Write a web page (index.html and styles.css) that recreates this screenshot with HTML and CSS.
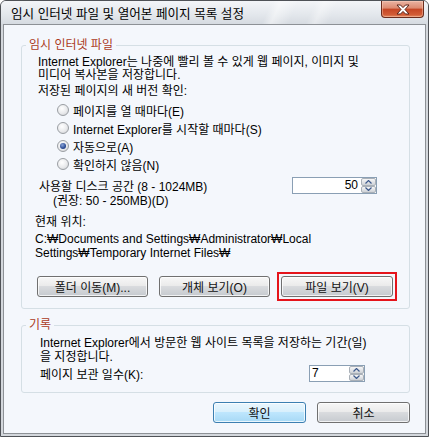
FILE: index.html
```html
<!DOCTYPE html>
<html lang="ko">

<head>
    <meta charset="UTF-8">
    <meta name="viewport" content="width=device-width, initial-scale=1.0">
    <title>임시 인터넷 파일 및 열어본 페이지 목록 설정</title>

    <link rel="stylesheet" href="styles.css">
</head>

<body>
    <div class="window">
        <header class="titlebar">
            <span class="title">임시 인터넷 파일 및 열어본 페이지 목록 설정</span>
            <button class="close-btn" type="button">
                <svg width="16" height="11" viewBox="0 0 16 11">
                    <path d="M2 1 L5.5 1 L8 3.6 L10.5 1 L14 1 L10 5.5 L14 10 L10.5 10 L8 7.4 L5.5 10 L2 10 L6 5.5 Z"
                        fill="#fff" stroke="#5a2418" stroke-width="1" stroke-linejoin="round" />
                </svg>
            </button>
        </header>

        <main class="client">
            <fieldset class="group group-cache">
                <legend>임시 인터넷 파일</legend>
                <p class="desc">Internet Explorer는 나중에 빨리 볼 수 있게 웹 페이지, 이미지 및<br>미디어 복사본을 저장합니다.</p>
                <p class="check-label">저장된 페이지의 새 버전 확인:</p>
                <ul class="radio-list">
                    <li><span class="radio"></span>페이지를 열 때마다(E)</li>
                    <li><span class="radio"></span>Internet Explorer를 시작할 때마다(S)</li>
                    <li><span class="radio checked"></span>자동으로(A)</li>
                    <li><span class="radio"></span>확인하지 않음(N)</li>
                </ul>
                <div class="disk-row">
                    <div class="disk-label">
                        <p>사용할 디스크 공간 (8 - 1024MB)</p>
                        <p class="disk-hint">(권장: 50 - 250MB)(D)</p>
                    </div>
                    <div class="spin spin-disk">
                        <span class="spin-value">50</span>
                        <div class="spin-btns">
                            <span class="spin-btn"><svg width="7" height="4" viewBox="0 0 7 4"><path d="M0.5 3.5 L3.5 0.5 L6.5 3.5" fill="none" stroke="#3d5a8c" stroke-width="1.2" /></svg></span>
                            <span class="spin-btn"><svg width="7" height="4" viewBox="0 0 7 4"><path d="M0.5 0.5 L3.5 3.5 L6.5 0.5" fill="none" stroke="#3d5a8c" stroke-width="1.2" /></svg></span>
                        </div>
                    </div>
                </div>
                <p class="location-label">현재 위치:</p>
                <p class="location-path">C:₩Documents and Settings₩Administrator₩Local<br>Settings₩Temporary Internet Files₩</p>
                <div class="group-buttons">
                    <button class="btn" type="button">폴더 이동(M)...</button>
                    <button class="btn" type="button">개체 보기(O)</button>
                    <span class="focus-ring">
                        <button class="btn btn-wide" type="button">파일 보기(V)</button>
                    </span>
                </div>
            </fieldset>

            <fieldset class="group group-history">
                <legend>기록</legend>
                <p class="desc">Internet Explorer에서 방문한 웹 사이트 목록을 저장하는 기간(일)<br>을 지정합니다.</p>
                <div class="days-row">
                    <p class="days-label">페이지 보관 일수(K):</p>
                    <div class="spin spin-days">
                        <span class="spin-value">7</span>
                        <div class="spin-btns">
                            <span class="spin-btn"><svg width="7" height="4" viewBox="0 0 7 4"><path d="M0.5 3.5 L3.5 0.5 L6.5 3.5" fill="none" stroke="#3d5a8c" stroke-width="1.2" /></svg></span>
                            <span class="spin-btn"><svg width="7" height="4" viewBox="0 0 7 4"><path d="M0.5 0.5 L3.5 3.5 L6.5 0.5" fill="none" stroke="#3d5a8c" stroke-width="1.2" /></svg></span>
                        </div>
                    </div>
                </div>
            </fieldset>

            <div class="dialog-buttons">
                <button class="btn btn-default" type="button">확인</button>
                <button class="btn" type="button">취소</button>
            </div>
        </main>
    </div>
</body>

</html>
```

FILE: styles.css
```css
* {
    padding: 0;
    margin: 0;
    box-sizing: border-box;
}

body {
    font-family: "Liberation Sans", "Noto Sans CJK KR", sans-serif;
    font-size: 12px;
    color: #000;
    background: #fff;
}

.window {
    width: 429px;
    height: 437px;
    border: 1px solid #4f5257;
    border-radius: 6px 6px 0 0;
    background: #d3d7dc;
    padding: 0 2px 2px 2px;
    display: flex;
    flex-direction: column;
}

.titlebar {
    height: 23px;
    display: flex;
    align-items: flex-start;
    margin: 0 -2px;
    padding: 0 4px 0 10px;
    border-radius: 5px 5px 0 0;
    background:
        linear-gradient(115deg, transparent 62%, rgba(255, 255, 255, .45) 64%, transparent 68%, transparent 72%, rgba(255, 255, 255, .35) 74%, transparent 77%),
        linear-gradient(to bottom, #f3f5f8, #e3e7ec 60%, #d6dbe1);
}

.title {
    margin-top: 6px;
    line-height: 15px;
    font-size: 12.6px;
    color: #000;
}

.close-btn {
    margin-left: auto;
    width: 43px;
    height: 17px;
    border: 1px solid #6b2c1d;
    border-top: none;
    border-radius: 0 0 4px 4px;
    background: linear-gradient(to bottom, #eab3a2, #dc8a70 45%, #c54524 50%, #d25c36 85%, #e58a62);
    display: flex;
    align-items: center;
    justify-content: center;
    box-shadow: inset 0 0 0 1px rgba(255, 220, 200, .4);
}

.client {
    flex: 1;
    background: #f4f7fc;
    border: 1px solid #8d9196;
    padding-top: 13px;
    display: flex;
    flex-direction: column;
}

.group {
    margin-left: 17px;
    width: 389px;
    border: 1px solid #d5dfe5;
    border-radius: 3px;
    padding: 0;
}

.group legend {
    margin-left: 4px;
    padding: 0 3px;
    line-height: 14px;
    color: #ab3a1c;
}

.group-cache {
    padding-bottom: 11px;
}

.group-history {
    margin-top: 9px;
    padding-bottom: 10px;
}

p {
    white-space: nowrap;
}

.group-cache .desc {
    margin: 4px 0 0 16px;
    line-height: 13px;
}

.check-label {
    margin: 3px 0 0 16px;
    line-height: 13px;
}

.radio-list {
    margin: 3px 0 0 35px;
    list-style: none;
}

.radio-list li {
    height: 18px;
    display: flex;
    align-items: center;
    gap: 4px;
}

.radio {
    width: 12px;
    height: 12px;
    border: 1px solid #9a9ea3;
    border-radius: 50%;
    background: radial-gradient(circle at 40% 35%, #ffffff, #e9eaec 55%, #c9cbce);
    display: flex;
    align-items: center;
    justify-content: center;
}

.radio.checked::after {
    content: "";
    width: 6px;
    height: 6px;
    border-radius: 50%;
    background: radial-gradient(circle at 40% 35%, #8aa4d8, #2c4c94 60%, #1d3570);
}

.disk-row {
    margin-top: 4px;
    display: flex;
    align-items: flex-start;
}

.disk-label {
    flex: 1;
    margin-left: 17px;
    padding-top: 3px;
    line-height: 14px;
}

.disk-hint {
    margin-left: 14px;
}

.spin {
    height: 17px;
    border: 1px solid #8a9fb4;
    background: #fff;
    display: flex;
    align-items: stretch;
}

.spin-disk {
    width: 85px;
    margin-right: 32px;
}

.spin-days {
    width: 56px;
    margin-right: 44px;
}

.spin-value {
    flex: 1;
    line-height: 15px;
    padding: 0 2px;
    text-align: right;
}

.spin-days .spin-value {
    text-align: left;
}

.spin-btns {
    width: 16px;
    display: flex;
    flex-direction: column;
    padding: 0 0 0 1px;
}

.spin-btn {
    flex: 1;
    border: 1px solid #a9b0b8;
    border-radius: 2px;
    background: linear-gradient(to bottom, #f6f6f6, #e2e4e7 50%, #cdd1d6);
    display: flex;
    align-items: center;
    justify-content: center;
}

.location-label {
    margin: 7px 0 0 13px;
    line-height: 14px;
}

.location-path {
    margin: 3px 0 0 13px;
    line-height: 14px;
}

.group-buttons {
    margin: 16px 0 0 15px;
    display: flex;
    gap: 11px;
}

.btn {
    width: 111px;
    height: 21px;
    font-family: inherit;
    font-size: 12px;
    color: #111;
    border: 1px solid #707070;
    border-radius: 3px;
    background: linear-gradient(to bottom, #f7f7f7, #ebebeb 45%, #d9dbde 50%, #c6cacf);
    box-shadow: inset 0 0 0 1px rgba(255, 255, 255, .75);
}

.btn-wide {
    width: 112px;
    display: block;
}

.focus-ring {
    display: block;
    margin: -4px;
    padding: 2px;
    border: 2px solid #e5141b;
}

.group-history .desc {
    margin: 4px 0 0 18px;
    line-height: 14px;
}

.days-row {
    margin-top: 1px;
    display: flex;
    align-items: flex-start;
}

.days-label {
    flex: 1;
    margin-left: 18px;
    padding-top: 3px;
    line-height: 14px;
}

.dialog-buttons {
    margin-top: 9px;
    padding-right: 15px;
    display: flex;
    justify-content: flex-end;
    gap: 11px;
}

.dialog-buttons .btn {
    width: 93px;
}

.btn-default {
    border-color: #3c7fb1;
    background: linear-gradient(to bottom, #eaf6fd, #d9f0fc 45%, #bee6fd 50%, #a7d9f5);
}
```
